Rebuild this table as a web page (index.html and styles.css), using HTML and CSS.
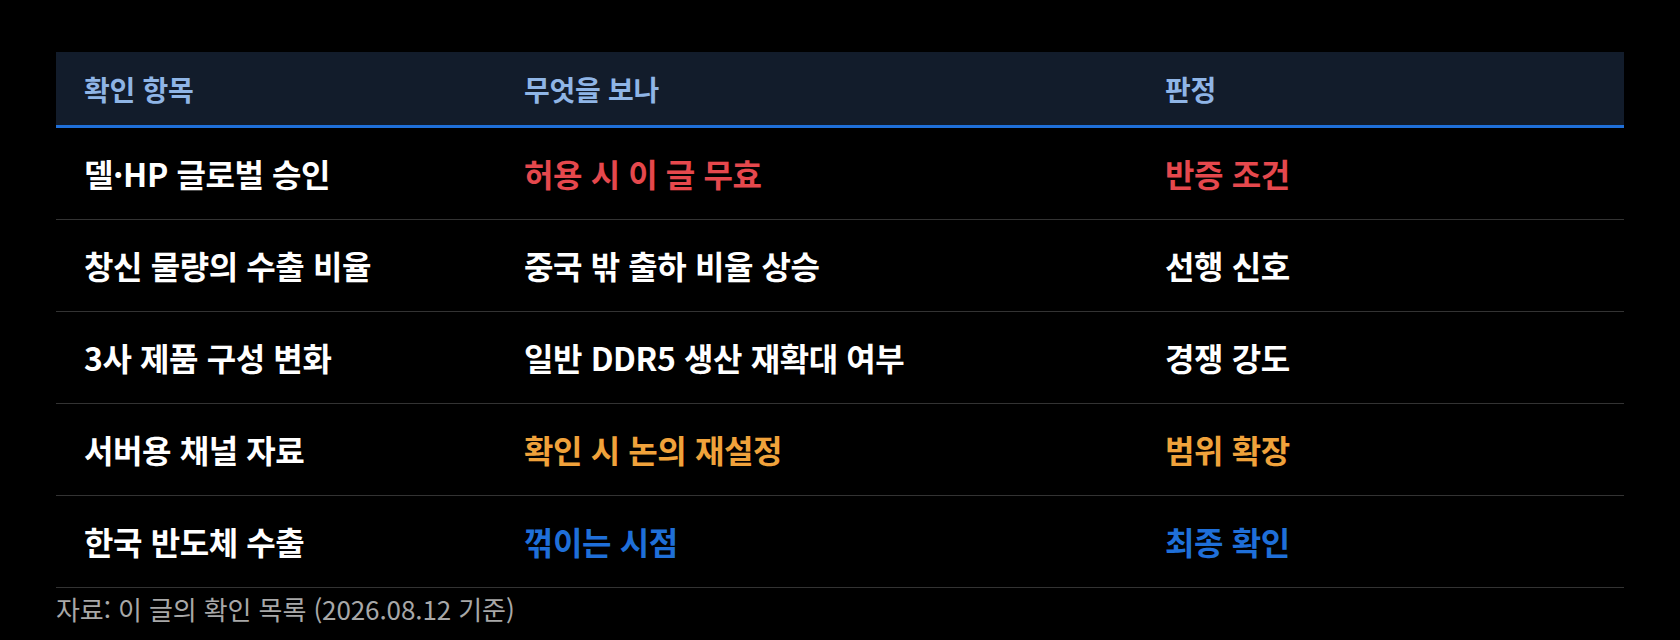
FILE: index.html
```html
<!DOCTYPE html>
<html lang="ko">
<head>
<meta charset="utf-8">
<title>확인 목록</title>
<link rel="stylesheet" href="styles.css">
</head>
<body>
<main class="page">
  <table class="check">
    <colgroup>
      <col class="c1"><col class="c2"><col class="c3">
    </colgroup>
    <thead>
      <tr><th>확인 항목</th><th>무엇을 보나</th><th>판정</th></tr>
    </thead>
    <tbody>
      <tr><td>델·HP 글로벌 승인</td><td class="red">허용 시 이 글 무효</td><td class="red">반증 조건</td></tr>
      <tr><td>창신 물량의 수출 비율</td><td>중국 밖 출하 비율 상승</td><td>선행 신호</td></tr>
      <tr><td>3사 제품 구성 변화</td><td>일반 DDR5 생산 재확대 여부</td><td>경쟁 강도</td></tr>
      <tr><td>서버용 채널 자료</td><td class="orange">확인 시 논의 재설정</td><td class="orange">범위 확장</td></tr>
      <tr><td>한국 반도체 수출</td><td class="blue">꺾이는 시점</td><td class="blue">최종 확인</td></tr>
    </tbody>
  </table>
  <p class="source">자료: 이 글의 확인 목록 (2026.08.12 기준)</p>
</main>
</body>
</html>
```

FILE: styles.css
```css
html, body {
  margin: 0;
  padding: 0;
  background: #000;
}
body {
  font-family: "Noto Sans CJK KR", "Noto Sans", sans-serif;
  color: #fff;
}
.page {
  padding: 52px 56px 0;
}
.check {
  width: 1568px;
  border-collapse: collapse;
  table-layout: fixed;
}
.c1 { width: 440px; }
.c2 { width: 641px; }
.c3 { width: 487px; }
.check th {
  background: #121c2b;
  color: #8fb5e6;
  font-size: 28px;
  font-weight: 700;
  line-height: 1.2;
  text-align: left;
  height: 70px;
  padding: 3px 0 0 28px;
  border-bottom: 3px solid #1f6fd8;
  letter-spacing: -0.3px;
}
.check td {
  height: 91px;
  padding: 0 0 0 28px;
  font-size: 32px;
  font-weight: 600;
  line-height: 1.2;
  letter-spacing: -0.4px;
  border-bottom: 1px solid #333;
  color: #fff;
}
.check td.red { color: #e5484d; font-weight: 700; }
.check td.orange { color: #f0a23b; font-weight: 700; }
.check td.blue { color: #1f6fd8; font-weight: 700; }
.source {
  margin: 3px 0 0;
  font-size: 26px;
  line-height: 1.4;
  color: #a8a8a8;
  letter-spacing: -0.1px;
}
```
